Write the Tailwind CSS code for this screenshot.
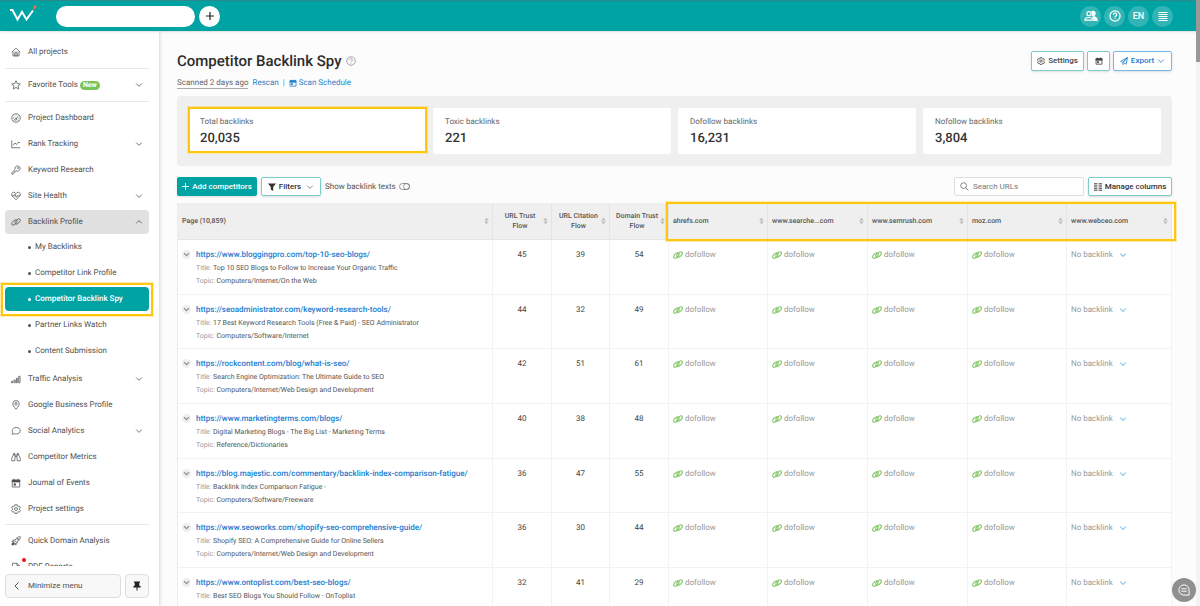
<!DOCTYPE html>
<html lang="en">
<head>
<meta charset="utf-8">
<meta name="viewport" content="width=device-width, initial-scale=1">
<title>Competitor Backlink Spy</title>
<script src="https://cdn.jsdelivr.net/npm/@tailwindcss/browser@4"></script>
</head>
<body class="relative flex h-screen flex-col overflow-hidden bg-[#fcfcfc] font-['Roboto',sans-serif] text-[8px] leading-3 text-[#444] [text-rendering:geometricPrecision]">

<svg class="hidden" aria-hidden="true">
  <defs>
    <symbol id="down" viewBox="0 0 10 10"><path d="M1.5 3.2 5 6.7l3.500-3.500"/></symbol>
    <symbol id="up" viewBox="0 0 10 10"><path d="M1.500 6.700 5 3.200l3.500 3.500"/></symbol>
    <symbol id="home" viewBox="0 0 20 20"><path d="M1.500 10.500 10 2.500l8.500 8M4 9v9h12V9M7.500 18v-5.500a2.500 2.500 0 0 1 5 0V18M10 12v6"/></symbol>
    <symbol id="star" viewBox="0 0 20 20"><path d="m10 1.500 2.500 5.800 6.200.5-4.800 4.100 1.500 6.200-5.400-3.300-5.400 3.300 1.500-6.200-4.800-4.100 6.200-.5z"/></symbol>
    <symbol id="gauge" viewBox="0 0 20 20"><circle cx="10" cy="10" r="8.500"/><circle cx="9.500" cy="12.500" r="2"/><path d="m10.800 11 3.200-4.500M10 3.500v1.500M4 10h1.500M14.800 10.500h1.500M5.500 6l1.200 1M5 15.500l1.500-.8M15 15.500l-1.500-.8"/></symbol>
    <symbol id="chart" viewBox="0 0 20 20"><path d="M1.500 3v14.500h17M4.500 12.500l3.500-4.500 3 3 3-4h4"/></symbol>
    <symbol id="key" viewBox="0 0 20 20"><path d="M12.800 1.700a5.300 5.300 0 1 1-2.700 9.700l-1 1.200-1.600.2v1.900l-1.700.2-.2 2-1.300 1.200H1.700v-3l6.600-6.300A5.300 5.300 0 0 1 12.800 1.700z"/><circle cx="14" cy="6" r="1.100"/></symbol>
    <symbol id="heart" viewBox="0 0 20 20"><path d="M10 17.500 3 10.500C-.5 6.500 2 2.500 5.500 2.500c2 0 3.500 1 4.500 2.700 1-1.700 2.500-2.700 4.500-2.700 3.500 0 6 4 2.500 8zM1.500 9.500h4.800l1.700-3.300 2.500 6.500 1.800-3.200h6.200"/></symbol>
    <symbol id="link" viewBox="0 0 20 20"><ellipse cx="6.800" cy="11" rx="3.600" ry="6.600" transform="rotate(46 6.800 11)"/><ellipse cx="13.200" cy="9" rx="3.600" ry="6.600" transform="rotate(46 13.200 9)"/></symbol>
    <symbol id="bars" viewBox="0 0 20 20"><path d="M1 17.500h2.500v-3H1zM6 17.500h2.500V12H6zM11 17.500h2.500V8.500H11zM15.500 17.500H18V4.500h-2.500z"/></symbol>
    <symbol id="pin" viewBox="0 0 20 20"><path d="M10 18.500C6 13.500 3.500 10.500 3.500 7.500a6.500 6.500 0 0 1 13 0c0 3-2.500 6-6.500 11z"/><circle cx="10" cy="7.500" r="2.500"/></symbol>
    <symbol id="chat" viewBox="0 0 20 20"><path d="M10.500 3c4.500 0 8 2.800 8 6.500s-3.500 6.500-8 6.500c-1.500 0-2.800-.2-4-.8-1.200.9-2.800 1.400-4.800 1.300 1.200-1 1.700-2 1.800-3.200-.7-1.100-1-2.300-1-3.800 0-3.700 3.500-6.500 8-6.500z"/></symbol>
    <symbol id="binoc" viewBox="0 0 20 20"><path d="M4.500 6 1.500 12.500v5H7.500L8.500 6zM15.500 6l3 6.500v5h-6L11.500 6zM5 6V3h3v3M15 6V3h-3v3M8.500 9h3"/></symbol>
    <symbol id="cal" viewBox="0 0 20 20"><path d="M2.500 4.500h15v13.500h-15z"/><path d="M2.500 4h15v4h-15zM6 1.500V5M14 1.500V5M6 11.500h3v3H6z" fill="currentColor"/></symbol>
    <symbol id="gear" viewBox="0 0 20 20"><path d="m7.800 1.500-.4 2.300-1.900 1.100-2.200-.8-2.100 3.600 1.800 1.500v2l-1.800 1.500 2.100 3.600 2.200-.8 1.900 1.100.4 2.300h4.400l.4-2.300 1.900-1.100 2.200.8 2.100-3.600-1.800-1.500v-2l1.800-1.500-2.100-3.600-2.200.8-1.900-1.100-.4-2.300z"/><circle cx="10" cy="10" r="3"/></symbol>
    <symbol id="rocket" viewBox="0 0 20 20"><path d="M18.500 1.500c-5 0-8 2-11 7.500l3.500 3.500c5.500-3 7.500-6 7.500-11zM8 8H4.500L2 11.500h4.500M12 12v3.500L8.500 18v-4.500M6 14l-4 4"/><circle cx="13.500" cy="6.500" r="1.500"/><path d="M5 12.500 2 15v3h3l2.500-3z" fill="currentColor"/></symbol>
    <symbol id="doc" viewBox="0 0 20 20"><path d="M3 18.500v-16h9l5 5v11zM12 2.500v5h5"/></symbol>
    <symbol id="plane" viewBox="0 0 20 20"><path d="M18.500 1.500 1.500 11l4.500 2.500 12.500-12L7.500 14.500V19l3-3.500L15.500 18z"/></symbol>
    <symbol id="help" viewBox="0 0 20 20"><circle cx="10" cy="10" r="8.500"/><path d="M7.300 8a2.700 2.700 0 1 1 4.200 2.200c-1 .7-1.500 1.100-1.500 2M10 13.800v1.400"/></symbol>
    <symbol id="sort" viewBox="0 0 10 14"><path d="M5 .5 9.500 5.800h-9zM5 13.500.5 8.200h9z" fill="currentColor" stroke="none"/></symbol>
    <symbol id="tack" viewBox="0 0 20 20"><path d="M4 1h12v2.500h-1.500V9l3 2v2h-15v-2l3-2V3.500H4zM9 13h2v6H9z" fill="currentColor" stroke="none"/></symbol>
  </defs>
</svg>

<header class="z-20 flex h-[31px] shrink-0 items-center border-t border-[#2b8a8b] bg-[#00a3a4] pr-[27px] pl-2.5 shadow-sm">
  <a href="#" aria-label="Home" class="mr-4 block">
    <svg class="h-[22px] w-[30px]" viewBox="0 0 30 22" fill="none"><path d="M0 5h2.500l5 9.500 4.500-7.500 4.500 7.500L23 5.500" stroke="#fff" stroke-width="2"/><path d="m23.500 3.800 2.500-3.300" stroke="#f26a3c" stroke-width="2.200"/></svg>
  </a>
  <input type="text" aria-label="Project" class="h-[21px] w-[139px] rounded-full bg-white px-3 outline-none">
  <button aria-label="Add project" class="ml-1 flex size-[21px] items-center justify-center rounded-full bg-white text-[#222]">
    <svg class="size-2.5" viewBox="0 0 10 10" fill="none" stroke="currentColor" stroke-width="1.200"><path d="M5 1v8M1 5h8"/></svg>
  </button>
  <div class="ml-auto flex gap-[3px] text-white">
    <button aria-label="Users" class="flex size-[21px] items-center justify-center rounded-full bg-[#33b5b6]"><svg class="h-3 w-3.5" viewBox="0 0 24 20" fill="none" stroke="currentColor" stroke-width="2"><circle cx="8.500" cy="6" r="3.500"/><path d="M1.500 17c0-3 2.500-4.500 7-4.500s7 1.500 7 4.500z"/><path d="M13.500 2.800a3.600 3.600 0 1 1 1 6.400zM16.500 11.500c4 .3 6 2 6 6h-5c0-2.500 0-4-2-5.500z" fill="currentColor"/></svg></button>
    <button aria-label="Help" class="flex size-[21px] items-center justify-center rounded-full bg-[#33b5b6]"><svg class="size-3" fill="none" stroke="currentColor" stroke-width="2"><use href="#help"/></svg></button>
    <button class="flex size-[21px] items-center justify-center rounded-full bg-[#33b5b6] text-[9px] font-medium">EN</button>
    <button aria-label="Menu" class="flex size-[21px] items-center justify-center rounded-full bg-[#33b5b6]"><svg class="size-2.5" viewBox="0 0 10 10" stroke="currentColor"><path d="M.5 1.500h9M.5 3.500h9M.5 5.500h9M.5 7.500h9M.5 9.500h9"/></svg></button>
  </div>
</header>

<div class="flex min-h-0 flex-1">
  <aside class="relative z-10 flex w-[159px] shrink-0 flex-col bg-white px-[5px] text-[#505050] shadow-[1px_0_3px_rgba(0,0,0,0.15)]">
    <nav id="nav" aria-label="Tools" class="flex min-h-0 flex-1 flex-col overflow-hidden pt-[9px] pr-[5px]"></nav>
    <div class="flex shrink-0 gap-1 pt-2 pr-[5px] pb-2">
      <button class="flex h-6 flex-1 items-center gap-1.5 rounded border border-[#ddd] bg-[#f8f8f8] pl-1.5"><svg class="size-2.5" viewBox="0 0 10 10" fill="none" stroke="currentColor"><path d="M6.500 1.500 3 5l3.500 3.500"/></svg>Minimize menu</button>
      <button aria-label="Pin menu" class="flex h-6 w-6 items-center justify-center rounded border border-[#ddd] bg-[#f8f8f8] text-[#222]"><svg class="size-2.5"><use href="#tack"/></svg></button>
    </div>
  </aside>

  <main class="min-w-0 flex-1 overflow-hidden pt-5 pr-7 pl-[18px]">
    <div class="flex items-start justify-between">
      <div>
        <h1 class="flex items-center gap-1 text-[15px] leading-5 font-medium text-[#2c2c2c]">Competitor Backlink Spy <svg class="size-2.5 text-[#888]" fill="none" stroke="currentColor" stroke-width="1.500"><use href="#help"/></svg></h1>
        <div class="mt-1.5 flex items-center text-[#2a83cc]">
          <span class="border-b border-[#aaa] leading-[10px] text-[#666]">Scanned 2 days ago</span>
          <a href="#" class="ml-1">Rescan</a>
          <span class="mx-1">|</span>
          <a href="#" class="flex items-center gap-0.5"><svg class="size-2" fill="none" stroke="currentColor" stroke-width="2"><use href="#cal"/></svg>Scan Schedule</a>
        </div>
      </div>
      <div class="flex gap-[3px] font-medium text-[#444]">
        <button class="flex h-5 w-[53px] items-center justify-center gap-[3px] rounded-xs border border-[#7acdca] bg-white shadow-sm"><svg class="size-2" fill="none" stroke="currentColor" stroke-width="2"><use href="#gear"/></svg>Settings</button>
        <button aria-label="Schedule" class="flex h-5 w-[23px] items-center justify-center rounded-xs border border-[#7acdca] bg-white shadow-sm"><svg class="size-2" fill="none" stroke="currentColor" stroke-width="2"><use href="#cal"/></svg></button>
        <button class="flex h-5 w-[59px] items-center justify-center gap-[3px] rounded-xs border border-[#7cb8e6] bg-white text-[#1c7cd0] shadow-sm"><svg class="size-2" fill="none" stroke="currentColor" stroke-width="2"><use href="#plane"/></svg>Export<svg class="size-2" fill="none" stroke="currentColor"><use href="#down"/></svg></button>
      </div>
    </div>

    <section aria-label="Summary" class="mt-[7px] grid grid-cols-4 gap-[7px] rounded bg-[#efefef] px-[11px] py-3">
      <div class="relative h-[46px] rounded-xs bg-white px-3 pt-2 text-[#666]"><p>Total backlinks</p><p class="mt-0.5 text-[13px] leading-[18px] font-medium text-[#333]">20,035</p><span class="absolute -top-px -right-px bottom-px left-0 border-2 border-[#ffc60e] shadow-[0_0_0_1px_#ffc60e55]"></span></div>
      <div class="h-[46px] rounded-xs bg-white px-3 pt-2 text-[#666]"><p>Toxic backlinks</p><p class="mt-0.5 text-[13px] leading-[18px] font-medium text-[#333]">221</p></div>
      <div class="h-[46px] rounded-xs bg-white px-3 pt-2 text-[#666]"><p>Dofollow backlinks</p><p class="mt-0.5 text-[13px] leading-[18px] font-medium text-[#333]">16,231</p></div>
      <div class="h-[46px] rounded-xs bg-white px-3 pt-2 text-[#666]"><p>Nofollow backlinks</p><p class="mt-0.5 text-[13px] leading-[18px] font-medium text-[#333]">3,804</p></div>
    </section>

    <div class="mt-[11px] flex items-center gap-1">
      <button class="flex h-[19px] w-20 items-center justify-center gap-[3px] rounded-xs bg-[#00a3a4] font-medium text-white shadow-sm"><svg class="size-[7px]" viewBox="0 0 8 8" stroke="currentColor"><path d="M4 0v8M0 4h8"/></svg>Add competitors</button>
      <button class="flex h-[19px] w-[60px] items-center justify-center gap-[3px] rounded-xs border border-[#7acdca] bg-white font-medium text-[#333] shadow-sm"><svg class="size-2" viewBox="0 0 10 10" fill="currentColor"><path d="M0 .5h10L6.500 5v5L3.500 8V5z"/></svg>Filters<svg class="ml-0.5 size-2" fill="none" stroke="#777"><use href="#down"/></svg></button>
      <label class="flex items-center gap-[3px] text-[#555]">Show backlink texts
        <input type="checkbox" role="switch" class="peer sr-only"><svg class="h-[7px] w-[11px]" viewBox="0 0 22 14" fill="none" stroke="#777" stroke-width="1.500"><rect x="1" y="1" width="20" height="12" rx="6"/><circle cx="15" cy="7" r="6"/></svg>
      </label>
      <label class="ml-auto flex h-[19px] w-[130px] items-center rounded-xs border border-[#ddd] bg-white pl-[5px]">
        <svg class="size-[9px] shrink-0" viewBox="0 0 10 10" fill="none" stroke="#777"><circle cx="4" cy="4" r="3.200"/><path d="m6.300 6.300 3 3"/></svg>
        <input type="search" aria-label="Search URLs" placeholder="Search URLs" class="ml-1 w-full min-w-0 outline-none placeholder:text-[#777]">
      </label>
      <button class="flex h-[19px] w-[84px] items-center justify-center gap-[3px] rounded-xs border border-[#7acdca] bg-white font-medium text-[#333] shadow-sm"><svg class="size-2" viewBox="0 0 8 8" fill="#777"><path d="M0 0h3.400v1.500H0zM0 2.200h3.400v1.500H0zM0 4.400h3.400v1.500H0zM0 6.600h3.400V8H0zM4.600 0H8v1.500H4.600zM4.600 2.200H8v1.500H4.600zM4.600 4.400H8v1.500H4.600zM4.600 6.600H8V8H4.600z"/></svg>Manage columns</button>
    </div>

    <div class="relative mt-[7px]">
      <table class="w-full table-fixed border-separate border-spacing-0 border-l border-[#ededed] bg-white">
        <colgroup><col><col class="w-[59px]"><col class="w-[58px]"><col class="w-[59px]"><col class="w-[99px]"><col class="w-[100px]"><col class="w-[100px]"><col class="w-[99px]"><col class="w-[105px]"></colgroup>
        <thead class="bg-[#efefef] text-[7px] leading-[10px] text-[#555]"><tr id="head"></tr></thead>
        <tbody id="rows"></tbody>
      </table>
      <span class="pointer-events-none absolute -top-px -right-1 h-[39px] w-[510px] border-2 border-[#ffc60e] shadow-[0_0_0_1px_#ffc60e55]"></span>
    </div>
  </main>
</div>

<div class="absolute top-0 right-0 z-30 h-full w-1 bg-[#f3f3f3]"><div class="h-[62px] bg-[#999]"></div></div>
<button aria-label="Open chat" class="absolute right-1 bottom-1 z-30 flex size-6 items-center justify-center rounded-full bg-[#8f8f8f] text-white">
  <svg class="size-3" viewBox="0 0 20 20" fill="none" stroke="currentColor" stroke-width="1.600"><path d="M10 1.500a8.500 8.500 0 1 0 0 17h8.500V10A8.500 8.500 0 0 0 10 1.500zM5.500 8h9M5.500 12h9"/></svg>
</button>

<script>
const icon = (id, cls, w = 1.5) => `<svg class="${cls}" fill="none" stroke="currentColor" stroke-width="${w}" aria-hidden="true"><use href="#${id}"/></svg>`;

const rule = h => `<hr class="${h} shrink-0 border-[#e8e8e8]">`;
const item = ([id, label, arrow, extra = ''], cls = '') =>
  `<a href="#" class="relative flex h-6 shrink-0 items-center pr-1.5 pl-1.5 ${cls}">${icon(id, 'mr-[7px] size-2.5 shrink-0')}${label}${extra}${arrow ? icon(arrow, 'ml-auto size-2', 1) : ''}</a>`;
const group = (list, cls) => `<div class="flex shrink-0 flex-col gap-0.5 ${cls}">${list.map(i => item(i, i[4])).join('')}</div>`;
const subs = ['My Backlinks', 'Competitor Link Profile', 'Competitor Backlink Spy', 'Partner Links Watch', 'Content Submission'];

document.getElementById('nav').innerHTML =
  item(['home', 'All projects']) + rule('mt-1 mb-1') +
  item(['star', 'Favorite Tools', 'down', '<span class="ml-0.5 rounded-full bg-[#7cc35c] px-[3px] text-[7px] leading-[9px] font-bold text-white">New</span>']) + rule('mt-1 mb-1') +
  group([['gauge', 'Project Dashboard'], ['chart', 'Rank Tracking', 'down'], ['key', 'Keyword Research'], ['heart', 'Site Health', 'down'], ['link', 'Backlink Profile', 'up', '', 'rounded bg-[#e1e1e1]']], '') +
  `<ul class="mt-px flex shrink-0 flex-col gap-0.5">${subs.map((s, i) =>
    `<li><a href="#" class="${i === 2 ? 'flex h-6 items-center gap-1 rounded bg-[#00a3a4] pl-[23px] font-medium text-white' : 'flex h-6 items-center gap-1 pl-[23px]'}"><span class="size-[3px] rounded-full bg-current"></span>${s}</a></li>`).join('')}</ul>` +
  group([['bars', 'Traffic Analysis', 'down'], ['pin', 'Google Business Profile'], ['chat', 'Social Analytics', 'down'], ['binoc', 'Competitor Metrics'], ['cal', 'Journal of Events'], ['gear', 'Project settings']], 'mt-1') +
  rule('mt-[3px] mb-1') +
  group([['rocket', 'Quick Domain Analysis'], ['doc', 'PDF Reports', '', '<span class="absolute top-[3px] left-[17px] size-1 rounded-full bg-[#e8151b]"></span>']], '');

const heads = ['Page (10,859)', 'URL Trust Flow', 'URL Citation Flow', 'Domain Trust Flow', 'ahrefs.com', 'www.searche...com', 'www.semrush.com', 'moz.com', 'www.webceo.com'];
document.getElementById('head').innerHTML = heads.map((h, i) =>
  `<th scope="col" class="h-[37px] border-r border-b border-[#e4e4e4] p-0 font-medium"><div class="flex items-center pr-[3px] pl-1"><span class="${i > 0 && i < 4 ? 'flex-1 text-center' : 'flex-1 text-left'}">${h}</span>${icon('sort', 'h-2 w-[5px] shrink-0 text-[#bbb]')}</div></th>`).join('');

const data = [
  ['https://www.bloggingpro.com/top-10-seo-blogs/', 'Top 10 SEO Blogs to Follow to Increase Your Organic Traffic', 'Computers/Internet/On the Web', 45, 39, 54],
  ['https://seoadministrator.com/keyword-research-tools/', '17 Best Keyword Research Tools (Free &amp; Paid) - SEO Administrator', 'Computers/Software/Internet', 44, 32, 49],
  ['https://rockcontent.com/blog/what-is-seo/', 'Search Engine Optimization: The Ultimate Guide to SEO', 'Computers/Internet/Web Design and Development', 42, 51, 61],
  ['https://www.marketingterms.com/blogs/', 'Digital Marketing Blogs - The Big List - Marketing Terms', 'Reference/Dictionaries', 40, 38, 48],
  ['https://blog.majestic.com/commentary/backlink-index-comparison-fatigue/', 'Backlink Index Comparison Fatigue -', 'Computers/Software/Freeware', 36, 47, 55],
  ['https://www.seoworks.com/shopify-seo-comprehensive-guide/', 'Shopify SEO: A Comprehensive Guide for Online Sellers', 'Computers/Internet/Web Design and Development', 36, 30, 44],
  ['https://www.ontoplist.com/best-seo-blogs/', 'Best SEO Blogs You Should Follow - OnToplist', 'Computers/Internet', 32, 41, 29]
];
document.getElementById('rows').innerHTML = data.map(([url, title, topic, ...nums]) => `<tr class="h-[55px] align-top nth-[3n+2]:h-[54px] [&>td]:border-r [&>td]:border-b [&>td]:border-[#f2f2f2] [&>td]:p-0 [&>td]:pt-[9px]">
  <td><div class="flex gap-[5px] pl-1"><button aria-label="Expand" class="mt-px flex size-[9px] items-center justify-center rounded-full bg-[#eee] text-[#888]">${icon('down', 'size-[7px]')}</button>
    <div class="min-w-0 text-[7px] leading-[13px] text-[#555]"><a href="#" class="block text-[8px] leading-3 font-medium text-[#1c7cd0]">${url}</a><p class="mt-px"><span class="text-[#999]">Title:</span> ${title}</p><p><span class="text-[#999]">Topic:</span> ${topic}</p></div></div></td>
  ${nums.map(n => `<td class="text-center">${n}</td>`).join('')}
  ${'<td><div class="flex items-center gap-0.5 pl-1 text-[#999]"><svg class="size-2.5 text-[#7cc35c]" fill="none" stroke="currentColor" stroke-width="2.200"><use href="#link"/></svg>dofollow</div></td>'.repeat(4)}
  <td><div class="flex items-center gap-1.5 pl-1 text-[#999]">No backlink ${icon('down', 'size-2 text-[#8cc8ee]', 1.5)}</div></td></tr>`).join('');
</script>
<div class="pointer-events-none absolute top-[283px] left-px z-20 h-[33px] w-[152px] border-2 border-[#ffc60e] shadow-[0_0_0_1px_#ffc60e55]"></div>
</body>
</html>
